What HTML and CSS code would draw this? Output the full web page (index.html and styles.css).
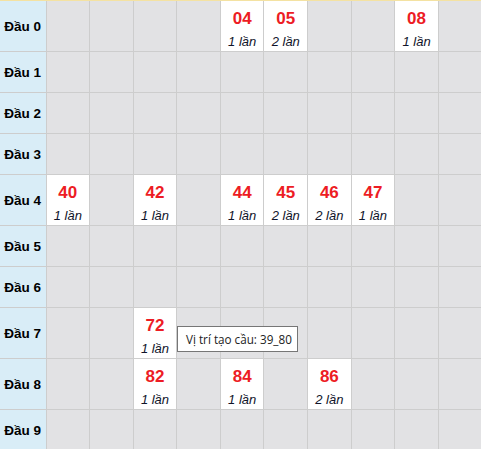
FILE: index.html
```html
<!DOCTYPE html>
<html lang="vi">
<head>
<meta charset="utf-8">
<link rel="stylesheet" href="styles.css">
</head>
<body>
<div class="wrap">
<table class="grid">
<colgroup><col class="c-head"><col><col><col><col><col><col><col><col><col><col></colgroup>
<tbody>
<tr class="full"><td class="hd">Đầu 0</td><td></td><td></td><td></td><td></td><td class="hit"><div class="num">04</div><div class="cnt">1 lần</div></td><td class="hit"><div class="num">05</div><div class="cnt">2 lần</div></td><td></td><td></td><td class="hit"><div class="num">08</div><div class="cnt">1 lần</div></td><td></td></tr>
<tr class="empty"><td class="hd">Đầu 1</td><td></td><td></td><td></td><td></td><td></td><td></td><td></td><td></td><td></td><td></td></tr>
<tr class="empty"><td class="hd">Đầu 2</td><td></td><td></td><td></td><td></td><td></td><td></td><td></td><td></td><td></td><td></td></tr>
<tr class="empty"><td class="hd">Đầu 3</td><td></td><td></td><td></td><td></td><td></td><td></td><td></td><td></td><td></td><td></td></tr>
<tr class="full"><td class="hd">Đầu 4</td><td class="hit"><div class="num">40</div><div class="cnt">1 lần</div></td><td></td><td class="hit"><div class="num">42</div><div class="cnt">1 lần</div></td><td></td><td class="hit"><div class="num">44</div><div class="cnt">1 lần</div></td><td class="hit"><div class="num">45</div><div class="cnt">2 lần</div></td><td class="hit"><div class="num">46</div><div class="cnt">2 lần</div></td><td class="hit"><div class="num">47</div><div class="cnt">1 lần</div></td><td></td><td></td></tr>
<tr class="empty"><td class="hd">Đầu 5</td><td></td><td></td><td></td><td></td><td></td><td></td><td></td><td></td><td></td><td></td></tr>
<tr class="empty"><td class="hd">Đầu 6</td><td></td><td></td><td></td><td></td><td></td><td></td><td></td><td></td><td></td><td></td></tr>
<tr class="full"><td class="hd">Đầu 7</td><td></td><td></td><td class="hit"><div class="num">72</div><div class="cnt">1 lần</div></td><td></td><td></td><td></td><td></td><td></td><td></td><td></td></tr>
<tr class="full"><td class="hd">Đầu 8</td><td></td><td></td><td class="hit"><div class="num">82</div><div class="cnt">1 lần</div></td><td></td><td class="hit"><div class="num">84</div><div class="cnt">1 lần</div></td><td></td><td class="hit"><div class="num">86</div><div class="cnt">2 lần</div></td><td></td><td></td><td></td></tr>
<tr class="empty"><td class="hd">Đầu 9</td><td></td><td></td><td></td><td></td><td></td><td></td><td></td><td></td><td></td><td></td></tr>
</tbody>
</table>
<div class="tip">Vị trí tạo cầu: 39_80</div>
</div>
</body>
</html>
```

FILE: styles.css
```css
html, body {
  margin: 0;
  padding: 0;
  background: #ffffff;
}
.wrap {
  position: relative;
  width: 481px;
  height: 449px;
  overflow: hidden;
  border-top: 1px solid #f4e2a2;
  box-sizing: border-box;
}
.grid {
  border-collapse: collapse;
  table-layout: fixed;
  width: 482px;
  font-family: "Liberation Sans", Arial, sans-serif;
}
.grid col { width: 43.6px; }
.grid col.c-head { width: 46px; }
.grid td {
  border: 1px solid #cdcdcd;
  background: #e2e2e4;
  padding: 0;
  text-align: center;
  vertical-align: top;
}
.grid tr:first-child td { border-top: none; }
.grid td:first-child { border-left: none; }
.grid tr.full td { height: 50px; }
.grid tr.empty td { height: 40px; }
.grid td.hd {
  background: #d9edf7;
  color: #000;
  font-weight: bold;
  font-size: 13.5px;
  vertical-align: middle;
}
.grid td.hit { background: #ffffff; }
.num {
  color: #ed1c24;
  font-weight: bold;
  font-size: 17px;
  line-height: 20px;
  padding-top: 8px;
}
.cnt {
  color: #10142a;
  font-style: italic;
  font-size: 13px;
  line-height: 15px;
  margin-top: 5px;
}
.tip {
  position: absolute;
  left: 177px;
  top: 325px;
  width: 121px;
  height: 26px;
  box-sizing: border-box;
  border: 1px solid #767676;
  background: #ffffff;
  color: #222;
  font-family: "Open Sans", "Noto Sans", sans-serif;
  font-size: 11.7px;
  line-height: 24px;
  padding-left: 8px;
  white-space: nowrap;
}
```
